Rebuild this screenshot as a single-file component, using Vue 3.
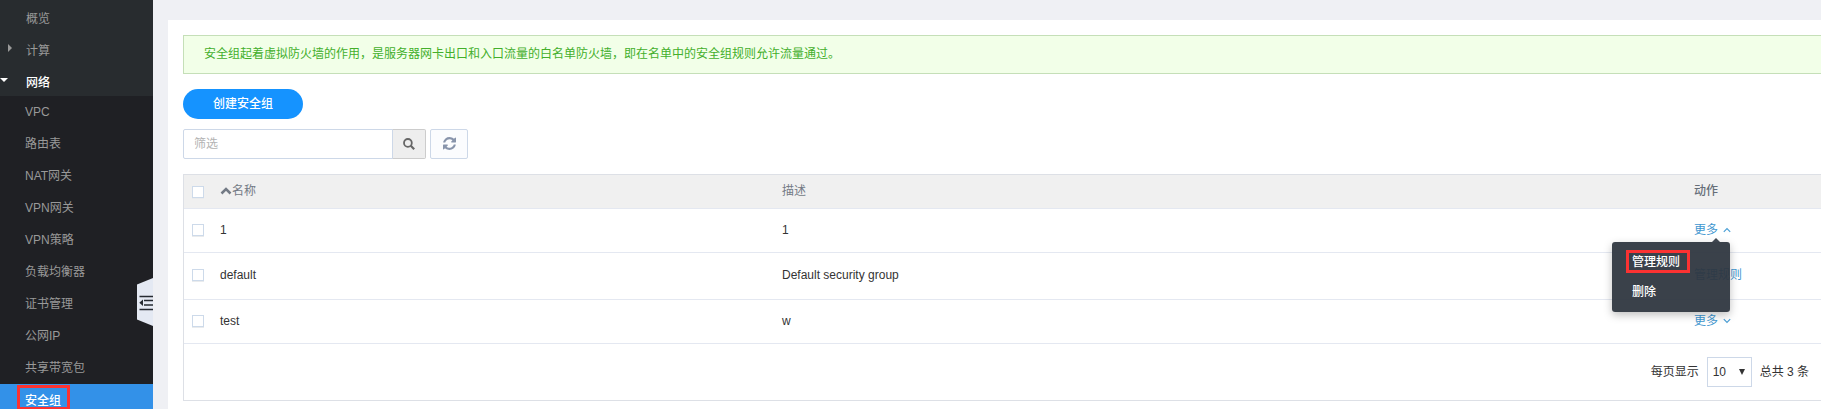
<script setup>
import { ref } from 'vue'

const topItems = [
  { label: '概览', arrow: '' },
  { label: '计算', arrow: 'right' },
  { label: '网络', arrow: 'down' }
]
const subItems = ['VPC', '路由表', 'NAT网关', 'VPN网关', 'VPN策略', '负载均衡器', '证书管理', '公网IP', '共享带宽包']
const rows = [
  { name: '1', desc: '1', action: '更多', caret: 'up' },
  { name: 'default', desc: 'Default security group', action: '管理规则', caret: '' },
  { name: 'test', desc: 'w', action: '更多', caret: 'down' }
]
const keyword = ref('')
</script>

<template>
  <div class="page">
    <aside class="sidebar">
      <nav class="top">
        <a v-for="t in topItems" :key="t.label" class="item" :class="{ open: t.arrow === 'down' }">
          <i v-if="t.arrow" class="tri" :class="t.arrow"></i>{{ t.label }}
        </a>
      </nav>
      <nav class="sub">
        <a v-for="s in subItems" :key="s" class="item">{{ s }}</a>
        <a class="item active">安全组<i class="mark"></i></a>
      </nav>
      <svg class="handle" width="16" height="48" viewBox="0 0 16 48">
        <path d="M0 6.500 16 0V48L0 41.500z" fill="#e4e9f3" />
        <path d="M2.500 18.500H16M7 22.500H16M7 27H16M2.500 31.500H16" stroke="#252a31" stroke-width="1.500" fill="none" />
        <path d="M2.300 24.700 6 21.500V28z" fill="#252a31" />
      </svg>
    </aside>

    <main class="panel">
      <div class="alert">安全组起着虚拟防火墙的作用，是服务器网卡出口和入口流量的白名单防火墙，即在名单中的安全组规则允许流量通过。</div>
      <button class="create">创建安全组</button>
      <div class="tools">
        <input v-model="keyword" class="filter" placeholder="筛选" />
        <button class="search">
          <svg width="12" height="12" viewBox="0 0 12 12" fill="none" stroke="#666" stroke-width="1.800">
            <circle cx="4.900" cy="4.900" r="3.900" />
            <path d="M7.800 7.800 11.200 11.200" stroke-width="2.200" />
          </svg>
        </button>
        <button class="refresh">
          <svg width="13" height="13" viewBox="0 0 1536 1536" fill="#8894ab">
            <path d="M1511 928q0 5-1 7-64 268-268 434.500T764 1536q-146 0-282.500-55T238 1324l-129 129q-19 19-45 19t-45-19-19-45V960q0-26 19-45t45-19h448q26 0 45 19t19 45-19 45l-137 137q71 66 161 102t187 36q134 0 250-65t186-179q11-17 53-117 8-23 30-23h192q13 0 22.500 9.500t9.500 22.500zm25-800v448q0 26-19 45t-45 19h-448q-26 0-45-19t-19-45 19-45l138-138Q969 256 768 256q-134 0-250 65T332 500q-11 17-53 117-8 23-30 23H50q-13 0-22.500-9.500T18 608v-7q65-268 270-434.500T768 0q146 0 284 55.500T1297 212l130-129q19-19 45-19t45 19 19 45z" />
          </svg>
        </button>
      </div>

      <section class="table">
        <div class="row head">
          <span class="cell"><i class="box"></i></span>
          <span class="cell name"><svg class="sort" width="12" height="8" viewBox="0 0 12 8"><path d="M1.500 6.500 6 2 10.500 6.500" fill="none" stroke="#737a85" stroke-width="2.500" /></svg>名称</span>
          <span class="cell">描述</span>
          <span class="cell strong">动作</span>
        </div>
        <div v-for="r in rows" :key="r.name" class="row" :class="{ tall: !r.caret }">
          <span class="cell"><i class="box"></i></span>
          <span class="cell">{{ r.name }}</span>
          <span class="cell">{{ r.desc }}</span>
          <span class="cell link">{{ r.action }}<svg v-if="r.caret" class="caret" :class="r.caret" width="8" height="6" viewBox="0 0 8 6"><path d="M.8 4.800 4 1.600 7.200 4.800" fill="none" stroke="#4a9fd5" stroke-width="1.200" /></svg>
            <span v-if="r.caret === 'up'" class="menu">
              <span class="opt">管理规则<i class="mark"></i></span>
              <span class="opt">删除</span>
            </span>
          </span>
        </div>
        <footer class="foot">
          <span>每页显示</span>
          <span class="select">10<i class="drop"></i></span>
          <span class="total">总共 3 条</span>
        </footer>
      </section>
    </main>
  </div>
</template>

<style>
body { overflow: hidden; }
</style>

<style scoped>
* { box-sizing: border-box; }
.page { display: flex; width: 1821px; height: 409px; overflow: hidden; background: #eff0f4; font: 12px/18px "Liberation Sans", "Noto Sans CJK SC", sans-serif; color: #333; }
.sidebar { position: relative; flex: none; width: 153px; height: 409px; background: #1f2024; color: #999; }
.top { background: #282c2f; }
.item { position: relative; display: flex; align-items: center; height: 32px; padding-left: 25px; }
.top .item { padding: 6px 0 0 26px; }
.open { color: #fff; font-weight: 500; }
.item.active { padding-top: 2px; background: #3391e8; color: #fff; font-weight: 500; }
.tri { position: absolute; border: 4px solid transparent; }
.tri.right { left: 8px; top: 12px; border-left-color: #999; border-right: 0; }
.tri.down { left: 0; top: 14px; border-top-color: #fff; border-bottom: 0; }
.mark { position: absolute; border: 3px solid #fb3232; }
.active .mark { left: 17px; top: 1px; width: 53px; height: 25px; }
.handle { position: absolute; left: 137px; top: 278px; }
.panel { flex: none; width: 1653px; margin: 20px 0 0 15px; padding: 15px 0 0 15px; background: #fff; }
.alert { height: 39px; padding: 9px 20px; border: 1px solid #c5dfb8; border-right: 0; background: #f2ffe8; color: #43af2b; }
button, input { font: inherit; }
.create { display: block; width: 120px; height: 30px; margin-top: 15px; padding: 0; border: 0; border-radius: 15px; background: #1593ff; color: #fff; font-weight: 500; }
.tools { display: flex; margin-top: 10px; }
.filter { width: 210px; height: 30px; padding: 0 10px; border: 1px solid #cdd8e8; border-radius: 2px 0 0 2px; outline: 0; background: #fff; }
.filter::placeholder { color: #b3b3b3; }
.search, .refresh { display: flex; align-items: center; justify-content: center; height: 30px; padding: 0; }
.search { width: 34px; margin-left: -1px; border: 1px solid #ccc; border-left-color: #cdd8e8; border-radius: 0 2px 2px 0; background: #eee; }
.refresh { width: 38px; margin-left: 4px; padding-bottom: 2px; border: 1px solid #cdd8e8; border-radius: 2px; background: #fbfcfe; }
.table { margin-top: 15px; height: 227px; border: 1px solid #dde0e6; border-right: 0; }
.row { display: grid; grid-template-columns: 36px 562px 912px 1fr; align-items: center; height: 44px; padding-bottom: 2px; border-bottom: 1px solid #e4e8f1; }
.row.head { height: 34px; padding-bottom: 0; background: #f0f0f0; color: #737a85; }
.row.tall { height: 47px; }
.cell { position: relative; display: flex; align-items: center; }
.row.head .cell { padding-bottom: 2px; }
.row.head .cell:first-child { padding: 0; }
.strong { font-weight: 500; color: #666e78; }
.box { width: 12px; height: 12px; margin-left: 8px; border: 1px solid #cddaea; background: #fff; box-shadow: 0 1px 0 #e9ebed; }
.link { color: #3f97d0; }
.caret { margin-left: 5px; margin-top: 1px; }
.caret.down { transform: rotate(180deg); }
.menu { position: absolute; z-index: 2; left: -82px; top: 21px; width: 118px; height: 70px; padding: 5px 20px; border-radius: 3px; background: rgba(46, 53, 63, .94); box-shadow: 0 3px 8px rgba(0, 0, 0, .25); color: #fff; font-weight: 500; }
.menu::before { content: ""; position: absolute; left: 100px; top: -4px; border: 4px solid transparent; border-top: 0; border-bottom-color: #404751; }
.opt { position: relative; display: flex; align-items: center; height: 30px; }
.opt .mark { left: -6px; top: 3px; width: 64px; height: 23px; }
.foot { display: flex; align-items: center; justify-content: flex-end; height: 56px; padding-right: 12px; }
.select { display: flex; align-items: center; justify-content: space-between; width: 45px; height: 30px; margin: 0 8px; padding: 0 6px 0 5px; border: 1px solid #cdd8e8; }
.drop { border: 3px solid transparent; border-top: 6px solid #333; border-bottom: 0; }
</style>
